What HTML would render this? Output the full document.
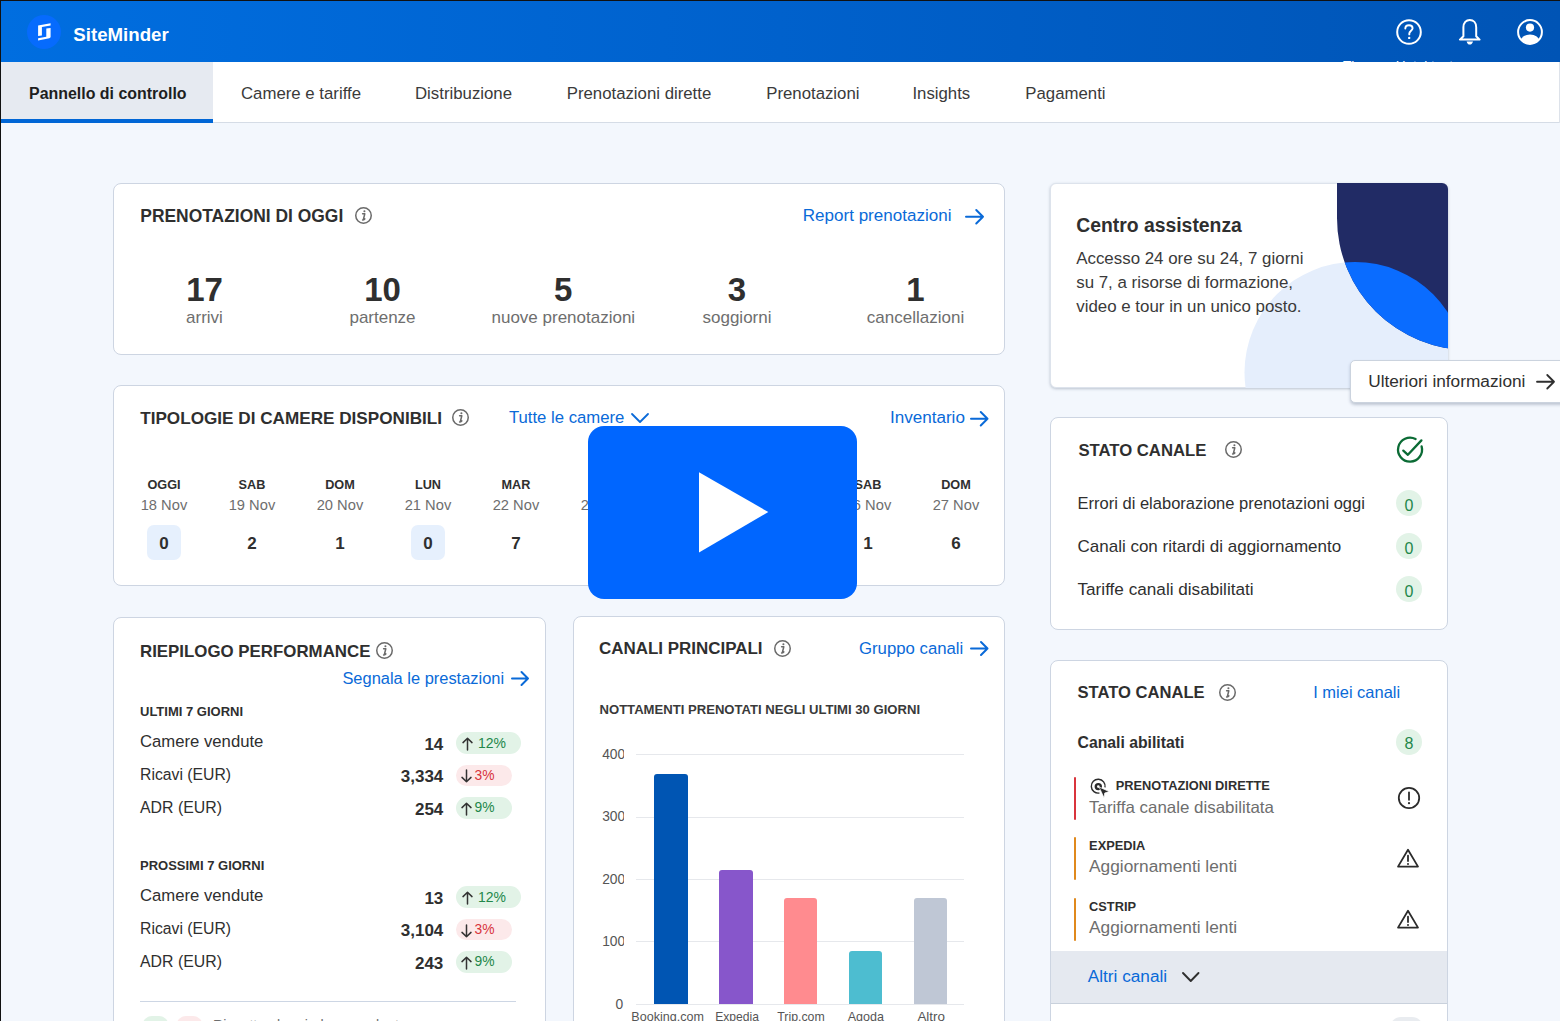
<!DOCTYPE html>
<html><head><meta charset="utf-8"><style>
html,body{margin:0;padding:0;width:1560px;height:1021px;overflow:hidden;background:#f3f7fd;font-family:"Liberation Sans",sans-serif;}
.t{position:absolute;white-space:nowrap;font-family:"Liberation Sans",sans-serif;}
</style></head><body>
<div style="position:absolute;left:0;top:0;width:1560px;height:62px;background:linear-gradient(90deg,#006ee0 0%,#0061cc 50%,#0054b5 100%)"></div>
<div style="position:absolute;left:0;top:0;width:1560px;height:1px;background:#111"></div>
<div style="position:absolute;left:0;top:0;width:1px;height:1021px;background:#111"></div>
<div style="position:absolute;left:27px;top:15px;width:34px;height:34px;border-radius:50%;background:#066bfd"></div>
<svg style="position:absolute;left:27px;top:15px" width="34" height="34" viewBox="0 0 34 34"><path d="M11.1 10.6 L23.6 8.3 L23.6 10.6 L14.9 12.1 L14.9 20.6 L11.1 21.0 Z" fill="#fff"/><path d="M19.3 13.4 L23.6 12.9 L23.6 22.2 L22.4 23.2 L11.1 25.6 L11.1 23.3 L19.3 21.8 Z" fill="#fff"/></svg>
<div class="t" style="left:73.30px;top:26.20px;font-size:18.66px;line-height:18.66px;font-weight:bold;color:#fff;">SiteMinder</div>
<svg style="position:absolute;left:1394px;top:17px" width="30" height="30" viewBox="0 0 30 30"><circle cx="15" cy="15" r="11.8" fill="none" stroke="#fff" stroke-width="2"/><path d="M11.3 11.6 C11.3 9.3 13 8.2 15 8.2 C17.1 8.2 18.6 9.5 18.6 11.3 C18.6 13.6 15.3 14 15.3 16.6 L15.3 17.4" fill="none" stroke="#fff" stroke-width="1.9" stroke-linecap="round"/><circle cx="15.2" cy="20.9" r="1.2" fill="#fff"/></svg>
<svg style="position:absolute;left:1455px;top:17px" width="30" height="30" viewBox="0 0 30 30"><path d="M8.4 19.2 V10.3 C8.4 5.6 11.2 2.9 14.8 2.9 C18.4 2.9 21.2 5.6 21.2 10.3 V19.2 L24.6 22.6 H4.9 Z" fill="none" stroke="#fff" stroke-width="2" stroke-linejoin="round"/><path d="M11.6 24.4 H18.0 C17.5 26.4 16.4 27.5 14.8 27.5 C13.2 27.5 12.1 26.4 11.6 24.4 Z" fill="#fff"/></svg>
<svg style="position:absolute;left:1515px;top:17px" width="30" height="30" viewBox="0 0 30 30"><defs><clipPath id="uc"><circle cx="15" cy="15" r="12"/></clipPath></defs><circle cx="15" cy="15" r="11.9" fill="none" stroke="#fff" stroke-width="2"/><circle cx="15" cy="10.6" r="4.1" fill="#fff"/><ellipse cx="15" cy="24.5" rx="9.5" ry="7" fill="#fff" clip-path="url(#uc)"/></svg>
<div class="t" style="left:1343.00px;top:58.72px;font-size:13.56px;line-height:13.56px;color:#fff;">Thomas Hotel test</div>
<div style="position:absolute;left:1px;top:62px;width:1559px;height:60px;background:#fff;border-bottom:1px solid #d5dce6"></div>
<div style="position:absolute;left:1559px;top:62px;width:1px;height:61px;background:#dde2ea"></div>
<div style="position:absolute;left:1px;top:62px;width:212px;height:57px;background:#e6eaf1"></div>
<div style="position:absolute;left:1px;top:119px;width:212px;height:4px;background:#0066d6"></div>
<div class="t" style="left:29.00px;top:85.70px;font-size:15.95px;line-height:15.95px;font-weight:bold;color:#1e1e1e;">Pannello di controllo</div>
<div class="t" style="left:241.00px;top:85.58px;font-size:16.80px;line-height:16.80px;color:#3a3a3a;">Camere e tariffe</div>
<div class="t" style="left:415.00px;top:85.58px;font-size:16.80px;line-height:16.80px;color:#3a3a3a;">Distribuzione</div>
<div class="t" style="left:566.70px;top:85.58px;font-size:16.80px;line-height:16.80px;color:#3a3a3a;">Prenotazioni dirette</div>
<div class="t" style="left:766.20px;top:85.58px;font-size:16.80px;line-height:16.80px;color:#3a3a3a;">Prenotazioni</div>
<div class="t" style="left:912.40px;top:85.58px;font-size:16.80px;line-height:16.80px;color:#3a3a3a;">Insights</div>
<div class="t" style="left:1025.30px;top:85.58px;font-size:16.80px;line-height:16.80px;color:#3a3a3a;">Pagamenti</div>
<div style="position:absolute;left:113px;top:183px;width:892px;height:172px;background:#fff;border:1px solid #cdd5e2;border-radius:8px;box-sizing:border-box;"></div>
<div class="t" style="left:140.30px;top:208.04px;font-size:17.43px;line-height:17.43px;font-weight:bold;color:#2f2f2f;">PRENOTAZIONI DI OGGI</div>
<svg style="position:absolute;left:353.00px;top:205.30px" width="21.0" height="21.0" viewBox="0 0 21.0 21.0"><circle cx="10.50" cy="10.50" r="7.75" fill="none" stroke="#6a6a6a" stroke-width="1.5"/><circle cx="11.40" cy="6.20" r="1.05" fill="#6a6a6a"/><path d="M9.60 8.80 H11.80 L10.30 14.80 M9.60 15.10 Q10.80 15.10 11.80 13.90" fill="none" stroke="#6a6a6a" stroke-width="1.5" stroke-linecap="round" stroke-linejoin="round"/></svg>
<div class="t" style="left:802.80px;top:207.47px;font-size:17.04px;line-height:17.04px;color:#0a6ad8;">Report prenotazioni</div>
<svg style="position:absolute;left:964.5px;top:208.5px;overflow:visible" width="19" height="15.5"><path d="M1 7.75 H18 M11.25 1 L18 7.75 L11.25 14.5" fill="none" stroke="#0a6ad8" stroke-width="2" stroke-linecap="round" stroke-linejoin="round"/></svg>
<div class="t" style="left:186.15px;top:272.86px;font-size:33.00px;line-height:33.00px;font-weight:bold;color:#2f2f2f;">17</div>
<div class="t" style="left:186.07px;top:309.31px;font-size:17.00px;line-height:17.00px;color:#6e6e6e;">arrivi</div>
<div class="t" style="left:364.15px;top:272.86px;font-size:33.00px;line-height:33.00px;font-weight:bold;color:#2f2f2f;">10</div>
<div class="t" style="left:349.43px;top:309.31px;font-size:17.00px;line-height:17.00px;color:#6e6e6e;">partenze</div>
<div class="t" style="left:554.12px;top:272.86px;font-size:33.00px;line-height:33.00px;font-weight:bold;color:#2f2f2f;">5</div>
<div class="t" style="left:491.47px;top:309.31px;font-size:17.00px;line-height:17.00px;color:#6e6e6e;">nuove prenotazioni</div>
<div class="t" style="left:727.83px;top:272.86px;font-size:33.00px;line-height:33.00px;font-weight:bold;color:#2f2f2f;">3</div>
<div class="t" style="left:702.50px;top:309.31px;font-size:17.00px;line-height:17.00px;color:#6e6e6e;">soggiorni</div>
<div class="t" style="left:906.33px;top:272.86px;font-size:33.00px;line-height:33.00px;font-weight:bold;color:#2f2f2f;">1</div>
<div class="t" style="left:866.83px;top:309.31px;font-size:17.00px;line-height:17.00px;color:#6e6e6e;">cancellazioni</div>
<div style="position:absolute;left:113px;top:385px;width:892px;height:201px;background:#fff;border:1px solid #cdd5e2;border-radius:8px;box-sizing:border-box;"></div>
<div class="t" style="left:140.20px;top:410.08px;font-size:17.15px;line-height:17.15px;font-weight:bold;color:#2f2f2f;">TIPOLOGIE DI CAMERE DISPONIBILI</div>
<svg style="position:absolute;left:450.30px;top:407.20px" width="21.0" height="21.0" viewBox="0 0 21.0 21.0"><circle cx="10.50" cy="10.50" r="7.75" fill="none" stroke="#6a6a6a" stroke-width="1.5"/><circle cx="11.40" cy="6.20" r="1.05" fill="#6a6a6a"/><path d="M9.60 8.80 H11.80 L10.30 14.80 M9.60 15.10 Q10.80 15.10 11.80 13.90" fill="none" stroke="#6a6a6a" stroke-width="1.5" stroke-linecap="round" stroke-linejoin="round"/></svg>
<div class="t" style="left:508.90px;top:409.74px;font-size:16.73px;line-height:16.73px;color:#0a6ad8;">Tutte le camere</div>
<svg style="position:absolute;left:630.5px;top:413px;overflow:visible" width="18" height="10"><path d="M1 1 L9.0 9 L17 1" fill="none" stroke="#0a6ad8" stroke-width="1.8" stroke-linecap="round" stroke-linejoin="round"/></svg>
<div class="t" style="left:889.90px;top:408.84px;font-size:17.08px;line-height:17.08px;color:#0a6ad8;">Inventario</div>
<svg style="position:absolute;left:970px;top:411px;overflow:visible" width="18.5" height="15.5"><path d="M1 7.75 H17.5 M10.75 1 L17.5 7.75 L10.75 14.5" fill="none" stroke="#0a6ad8" stroke-width="2" stroke-linecap="round" stroke-linejoin="round"/></svg>
<div style="position:absolute;left:147px;top:525px;width:34px;height:35px;background:#e6f0fd;border-radius:7px"></div>
<div class="t" style="left:147.43px;top:478.85px;font-size:12.70px;line-height:12.70px;font-weight:bold;color:#2f2f2f;">OGGI</div>
<div class="t" style="left:140.70px;top:497.65px;font-size:14.70px;line-height:14.70px;color:#6e6e6e;">18 Nov</div>
<div class="t" style="left:159.28px;top:534.51px;font-size:17.00px;line-height:17.00px;font-weight:bold;color:#2f2f2f;">0</div>
<div class="t" style="left:238.60px;top:478.85px;font-size:12.70px;line-height:12.70px;font-weight:bold;color:#2f2f2f;">SAB</div>
<div class="t" style="left:228.70px;top:497.65px;font-size:14.70px;line-height:14.70px;color:#6e6e6e;">19 Nov</div>
<div class="t" style="left:247.28px;top:534.51px;font-size:17.00px;line-height:17.00px;font-weight:bold;color:#2f2f2f;">2</div>
<div class="t" style="left:325.18px;top:478.85px;font-size:12.70px;line-height:12.70px;font-weight:bold;color:#2f2f2f;">DOM</div>
<div class="t" style="left:316.70px;top:497.65px;font-size:14.70px;line-height:14.70px;color:#6e6e6e;">20 Nov</div>
<div class="t" style="left:335.27px;top:534.51px;font-size:17.00px;line-height:17.00px;font-weight:bold;color:#2f2f2f;">1</div>
<div style="position:absolute;left:411px;top:525px;width:34px;height:35px;background:#e6f0fd;border-radius:7px"></div>
<div class="t" style="left:414.95px;top:478.85px;font-size:12.70px;line-height:12.70px;font-weight:bold;color:#2f2f2f;">LUN</div>
<div class="t" style="left:404.70px;top:497.65px;font-size:14.70px;line-height:14.70px;color:#6e6e6e;">21 Nov</div>
<div class="t" style="left:423.27px;top:534.51px;font-size:17.00px;line-height:17.00px;font-weight:bold;color:#2f2f2f;">0</div>
<div class="t" style="left:501.55px;top:478.85px;font-size:12.70px;line-height:12.70px;font-weight:bold;color:#2f2f2f;">MAR</div>
<div class="t" style="left:492.70px;top:497.65px;font-size:14.70px;line-height:14.70px;color:#6e6e6e;">22 Nov</div>
<div class="t" style="left:511.27px;top:534.51px;font-size:17.00px;line-height:17.00px;font-weight:bold;color:#2f2f2f;">7</div>
<div class="t" style="left:589.90px;top:478.85px;font-size:12.70px;line-height:12.70px;font-weight:bold;color:#2f2f2f;">MER</div>
<div class="t" style="left:580.70px;top:497.65px;font-size:14.70px;line-height:14.70px;color:#6e6e6e;">23 Nov</div>
<div class="t" style="left:599.27px;top:534.51px;font-size:17.00px;line-height:17.00px;font-weight:bold;color:#2f2f2f;">3</div>
<div class="t" style="left:680.35px;top:478.85px;font-size:12.70px;line-height:12.70px;font-weight:bold;color:#2f2f2f;">GIO</div>
<div class="t" style="left:668.70px;top:497.65px;font-size:14.70px;line-height:14.70px;color:#6e6e6e;">24 Nov</div>
<div class="t" style="left:687.27px;top:534.51px;font-size:17.00px;line-height:17.00px;font-weight:bold;color:#2f2f2f;">4</div>
<div class="t" style="left:766.95px;top:478.85px;font-size:12.70px;line-height:12.70px;font-weight:bold;color:#2f2f2f;">VEN</div>
<div class="t" style="left:756.70px;top:497.65px;font-size:14.70px;line-height:14.70px;color:#6e6e6e;">25 Nov</div>
<div class="t" style="left:775.27px;top:534.51px;font-size:17.00px;line-height:17.00px;font-weight:bold;color:#2f2f2f;">2</div>
<div class="t" style="left:854.60px;top:478.85px;font-size:12.70px;line-height:12.70px;font-weight:bold;color:#2f2f2f;">SAB</div>
<div class="t" style="left:844.70px;top:497.65px;font-size:14.70px;line-height:14.70px;color:#6e6e6e;">26 Nov</div>
<div class="t" style="left:863.27px;top:534.51px;font-size:17.00px;line-height:17.00px;font-weight:bold;color:#2f2f2f;">1</div>
<div class="t" style="left:941.17px;top:478.85px;font-size:12.70px;line-height:12.70px;font-weight:bold;color:#2f2f2f;">DOM</div>
<div class="t" style="left:932.70px;top:497.65px;font-size:14.70px;line-height:14.70px;color:#6e6e6e;">27 Nov</div>
<div class="t" style="left:951.27px;top:534.51px;font-size:17.00px;line-height:17.00px;font-weight:bold;color:#2f2f2f;">6</div>
<div style="position:absolute;left:113px;top:617px;width:433px;height:420px;background:#fff;border:1px solid #cdd5e2;border-radius:8px;box-sizing:border-box;"></div>
<div class="t" style="left:140.00px;top:643.82px;font-size:16.86px;line-height:16.86px;font-weight:bold;color:#2f2f2f;">RIEPILOGO PERFORMANCE</div>
<svg style="position:absolute;left:373.50px;top:640.00px" width="21.0" height="21.0" viewBox="0 0 21.0 21.0"><circle cx="10.50" cy="10.50" r="7.75" fill="none" stroke="#6a6a6a" stroke-width="1.5"/><circle cx="11.40" cy="6.20" r="1.05" fill="#6a6a6a"/><path d="M9.60 8.80 H11.80 L10.30 14.80 M9.60 15.10 Q10.80 15.10 11.80 13.90" fill="none" stroke="#6a6a6a" stroke-width="1.5" stroke-linecap="round" stroke-linejoin="round"/></svg>
<div class="t" style="left:342.40px;top:669.66px;font-size:16.46px;line-height:16.46px;color:#0a6ad8;">Segnala le prestazioni</div>
<svg style="position:absolute;left:510.5px;top:671px;overflow:visible" width="18" height="15"><path d="M1 7.5 H17 M10.5 1 L17 7.5 L10.5 14" fill="none" stroke="#0a6ad8" stroke-width="2" stroke-linecap="round" stroke-linejoin="round"/></svg>
<div class="t" style="left:140.00px;top:704.99px;font-size:13.00px;line-height:13.00px;font-weight:bold;color:#2f2f2f;">ULTIMI 7 GIORNI</div>
<div class="t" style="left:140.00px;top:733.86px;font-size:16.70px;line-height:16.70px;color:#2f2f2f;">Camere vendute</div>
<div class="t" style="left:424.40px;top:735.61px;font-size:17.00px;line-height:17.00px;font-weight:bold;color:#2f2f2f;">14</div>
<div style="position:absolute;left:455.6px;top:732.0px;width:65px;height:21.7px;background:#e2f3e7;border-radius:11px"></div>
<svg style="position:absolute;left:461px;top:736.7px" width="13" height="14"><path d="M6.5 13 V1.2 M2 5.6 L6.5 1.2 L11 5.6" fill="none" stroke="#333" stroke-width="1.5" stroke-linecap="round" stroke-linejoin="round"/></svg>
<div class="t" style="left:478.00px;top:735.86px;font-size:13.99px;line-height:13.99px;color:#23874a;">12%</div>
<div class="t" style="left:140.00px;top:767.24px;font-size:15.78px;line-height:15.78px;color:#2f2f2f;">Ricavi (EUR)</div>
<div class="t" style="left:400.75px;top:768.21px;font-size:17.00px;line-height:17.00px;font-weight:bold;color:#2f2f2f;">3,334</div>
<div style="position:absolute;left:455.6px;top:764.6px;width:56.4px;height:21.7px;background:#fce9ea;border-radius:11px"></div>
<svg style="position:absolute;left:460px;top:769.3px" width="13" height="14"><path d="M6.5 1 V12.8 M2 8.4 L6.5 12.8 L11 8.4" fill="none" stroke="#333" stroke-width="1.5" stroke-linecap="round" stroke-linejoin="round"/></svg>
<div class="t" style="left:474.50px;top:768.59px;font-size:13.84px;line-height:13.84px;color:#d8343c;">3%</div>
<div class="t" style="left:140.00px;top:799.76px;font-size:15.87px;line-height:15.87px;color:#2f2f2f;">ADR (EUR)</div>
<div class="t" style="left:414.95px;top:800.81px;font-size:17.00px;line-height:17.00px;font-weight:bold;color:#2f2f2f;">254</div>
<div style="position:absolute;left:455.6px;top:797.2px;width:56.4px;height:21.7px;background:#e2f3e7;border-radius:11px"></div>
<svg style="position:absolute;left:460.2px;top:801.9px" width="13" height="14"><path d="M6.5 13 V1.2 M2 5.6 L6.5 1.2 L11 5.6" fill="none" stroke="#333" stroke-width="1.5" stroke-linecap="round" stroke-linejoin="round"/></svg>
<div class="t" style="left:474.50px;top:801.19px;font-size:13.84px;line-height:13.84px;color:#23874a;">9%</div>
<div class="t" style="left:140.00px;top:859.19px;font-size:13.00px;line-height:13.00px;font-weight:bold;color:#2f2f2f;">PROSSIMI 7 GIORNI</div>
<div class="t" style="left:140.00px;top:888.06px;font-size:16.70px;line-height:16.70px;color:#2f2f2f;">Camere vendute</div>
<div class="t" style="left:424.40px;top:889.81px;font-size:17.00px;line-height:17.00px;font-weight:bold;color:#2f2f2f;">13</div>
<div style="position:absolute;left:455.6px;top:886.2px;width:65px;height:21.7px;background:#e2f3e7;border-radius:11px"></div>
<svg style="position:absolute;left:461px;top:890.9px" width="13" height="14"><path d="M6.5 13 V1.2 M2 5.6 L6.5 1.2 L11 5.6" fill="none" stroke="#333" stroke-width="1.5" stroke-linecap="round" stroke-linejoin="round"/></svg>
<div class="t" style="left:478.00px;top:890.06px;font-size:13.99px;line-height:13.99px;color:#23874a;">12%</div>
<div class="t" style="left:140.00px;top:921.44px;font-size:15.78px;line-height:15.78px;color:#2f2f2f;">Ricavi (EUR)</div>
<div class="t" style="left:400.75px;top:922.41px;font-size:17.00px;line-height:17.00px;font-weight:bold;color:#2f2f2f;">3,104</div>
<div style="position:absolute;left:455.6px;top:918.8000000000001px;width:56.4px;height:21.7px;background:#fce9ea;border-radius:11px"></div>
<svg style="position:absolute;left:460px;top:923.5px" width="13" height="14"><path d="M6.5 1 V12.8 M2 8.4 L6.5 12.8 L11 8.4" fill="none" stroke="#333" stroke-width="1.5" stroke-linecap="round" stroke-linejoin="round"/></svg>
<div class="t" style="left:474.50px;top:922.79px;font-size:13.84px;line-height:13.84px;color:#d8343c;">3%</div>
<div class="t" style="left:140.00px;top:953.96px;font-size:15.87px;line-height:15.87px;color:#2f2f2f;">ADR (EUR)</div>
<div class="t" style="left:414.95px;top:955.01px;font-size:17.00px;line-height:17.00px;font-weight:bold;color:#2f2f2f;">243</div>
<div style="position:absolute;left:455.6px;top:951.4000000000001px;width:56.4px;height:21.7px;background:#e2f3e7;border-radius:11px"></div>
<svg style="position:absolute;left:460.2px;top:956.1px" width="13" height="14"><path d="M6.5 13 V1.2 M2 5.6 L6.5 1.2 L11 5.6" fill="none" stroke="#333" stroke-width="1.5" stroke-linecap="round" stroke-linejoin="round"/></svg>
<div class="t" style="left:474.50px;top:955.39px;font-size:13.84px;line-height:13.84px;color:#23874a;">9%</div>
<div style="position:absolute;left:140px;top:1000.5px;width:376px;height:1.3px;background:#cdd6e4"></div>
<div style="position:absolute;left:142px;top:1016px;width:27px;height:20px;background:#e2f3e7;border-radius:10px"></div>
<div style="position:absolute;left:176px;top:1016px;width:27px;height:20px;background:#fce9ea;border-radius:10px"></div>
<div class="t" style="left:213.00px;top:1018.44px;font-size:14.24px;line-height:14.24px;color:#6e6e6e;">Rispetto al periodo precedente</div>
<div style="position:absolute;left:573px;top:616px;width:432px;height:420px;background:#fff;border:1px solid #cdd5e2;border-radius:8px;box-sizing:border-box;"></div>
<div class="t" style="left:599.00px;top:641.23px;font-size:16.97px;line-height:16.97px;font-weight:bold;color:#2f2f2f;">CANALI PRINCIPALI</div>
<svg style="position:absolute;left:772.00px;top:638.00px" width="21.0" height="21.0" viewBox="0 0 21.0 21.0"><circle cx="10.50" cy="10.50" r="7.75" fill="none" stroke="#6a6a6a" stroke-width="1.5"/><circle cx="11.40" cy="6.20" r="1.05" fill="#6a6a6a"/><path d="M9.60 8.80 H11.80 L10.30 14.80 M9.60 15.10 Q10.80 15.10 11.80 13.90" fill="none" stroke="#6a6a6a" stroke-width="1.5" stroke-linecap="round" stroke-linejoin="round"/></svg>
<div class="t" style="left:859.00px;top:640.62px;font-size:16.75px;line-height:16.75px;color:#0a6ad8;">Gruppo canali</div>
<svg style="position:absolute;left:970px;top:641px;overflow:visible" width="18.5" height="15"><path d="M1 7.5 H17.5 M11.0 1 L17.5 7.5 L11.0 14" fill="none" stroke="#0a6ad8" stroke-width="2" stroke-linecap="round" stroke-linejoin="round"/></svg>
<div style="position:absolute;left:599px;top:690px;width:400px;height:30px;overflow:hidden">
<div class="t" style="left:-26.45px;top:12.91px;font-size:13.10px;line-height:13.10px;font-weight:bold;color:#3a3a3a;">PERNOTTAMENTI PRENOTATI NEGLI ULTIMI 30 GIORNI</div>
</div>
<div style="position:absolute;left:636px;top:754.1px;width:328px;height:1px;background:#e6e8ec"></div>
<div style="position:absolute;left:590px;top:742.6px;width:34px;height:24px;overflow:hidden">
<div class="t" style="left:12.15px;top:5.32px;font-size:13.80px;line-height:13.80px;color:#555;">400</div>
</div>
<div style="position:absolute;left:636px;top:816.5500000000001px;width:328px;height:1px;background:#e6e8ec"></div>
<div style="position:absolute;left:590px;top:805.1px;width:34px;height:24px;overflow:hidden">
<div class="t" style="left:12.15px;top:5.32px;font-size:13.80px;line-height:13.80px;color:#555;">300</div>
</div>
<div style="position:absolute;left:636px;top:879.0px;width:328px;height:1px;background:#e6e8ec"></div>
<div style="position:absolute;left:590px;top:867.5px;width:34px;height:24px;overflow:hidden">
<div class="t" style="left:12.15px;top:5.32px;font-size:13.80px;line-height:13.80px;color:#555;">200</div>
</div>
<div style="position:absolute;left:636px;top:941.45px;width:328px;height:1px;background:#e6e8ec"></div>
<div style="position:absolute;left:590px;top:930.0px;width:34px;height:24px;overflow:hidden">
<div class="t" style="left:12.15px;top:5.32px;font-size:13.80px;line-height:13.80px;color:#555;">100</div>
</div>
<div style="position:absolute;left:636px;top:1003.9000000000001px;width:328px;height:1px;background:#e6e8ec"></div>
<div style="position:absolute;left:590px;top:992.4px;width:34px;height:24px;overflow:hidden">
<div class="t" style="left:25.60px;top:5.32px;font-size:13.80px;line-height:13.80px;color:#555;">0</div>
</div>
<div style="position:absolute;left:654.4px;top:774.2px;width:33.3px;height:230.19999999999993px;background:#0055b3;border-radius:3px 3px 0 0"></div>
<div class="t" style="left:631.33px;top:1010.87px;font-size:12.56px;line-height:12.56px;color:#555;">Booking.com</div>
<div style="position:absolute;left:719.4px;top:870.3px;width:33.3px;height:134.10000000000002px;background:#8756cb;border-radius:3px 3px 0 0"></div>
<div class="t" style="left:715.23px;top:1011.24px;font-size:12.12px;line-height:12.12px;color:#555;">Expedia</div>
<div style="position:absolute;left:784px;top:898.2px;width:33.3px;height:106.19999999999993px;background:#ff8b8f;border-radius:3px 3px 0 0"></div>
<div class="t" style="left:777.23px;top:1011.06px;font-size:12.33px;line-height:12.33px;color:#555;">Trip.com</div>
<div style="position:absolute;left:849.1px;top:951.1px;width:33.3px;height:53.299999999999955px;background:#4dbdd0;border-radius:3px 3px 0 0"></div>
<div class="t" style="left:847.65px;top:1010.87px;font-size:12.55px;line-height:12.55px;color:#555;">Agoda</div>
<div style="position:absolute;left:913.8px;top:898.2px;width:33.3px;height:106.19999999999993px;background:#bfc7d5;border-radius:3px 3px 0 0"></div>
<div class="t" style="left:917.43px;top:1010.13px;font-size:13.42px;line-height:13.42px;color:#555;">Altro</div>
<div style="position:absolute;left:1050px;top:183px;width:398px;height:205px;background:#fff;border:1px solid #dde3ec;border-radius:6px;box-sizing:border-box;box-shadow:0 1px 3px rgba(40,60,90,0.28)"></div>
<div style="position:absolute;left:1050px;top:183px;width:398px;height:205px;border-radius:6px;overflow:hidden"><svg style="position:absolute;left:0;top:0" width="398" height="205"><defs><clipPath id="nv"><path d="M287 -5 H420 V167 A132 132 0 0 1 287 35 Z"/></clipPath></defs><circle cx="305" cy="189.5" r="110.5" fill="#e5eefc"/><path d="M287 -5 H420 V167 A132 132 0 0 1 287 35 Z" fill="#212b65"/><circle cx="305" cy="189.5" r="110.5" fill="#0a6cff" clip-path="url(#nv)"/></svg></div>
<div class="t" style="left:1076.20px;top:215.89px;font-size:19.38px;line-height:19.38px;font-weight:bold;color:#2f2f2f;">Centro assistenza</div>
<div class="t" style="left:1076.20px;top:251.49px;font-size:16.90px;line-height:16.90px;color:#3a3a3a;">Accesso 24 ore su 24, 7 giorni</div>
<div class="t" style="left:1076.20px;top:275.34px;font-size:16.90px;line-height:16.90px;color:#3a3a3a;">su 7, a risorse di formazione,</div>
<div class="t" style="left:1076.20px;top:299.19px;font-size:16.90px;line-height:16.90px;color:#3a3a3a;">video e tour in un unico posto.</div>
<div style="position:absolute;left:1350px;top:359.5px;width:240px;height:43px;background:#fff;border:1px solid #cbd3de;border-radius:5px;box-sizing:border-box;box-shadow:0 2px 3px rgba(40,60,90,0.25)"></div>
<div class="t" style="left:1368.20px;top:373.19px;font-size:17.26px;line-height:17.26px;color:#2f2f2f;">Ulteriori informazioni</div>
<svg style="position:absolute;left:1535.5px;top:373.5px;overflow:visible" width="19" height="15.5"><path d="M1 7.75 H18 M11.25 1 L18 7.75 L11.25 14.5" fill="none" stroke="#2f2f2f" stroke-width="1.8" stroke-linecap="round" stroke-linejoin="round"/></svg>
<div style="position:absolute;left:1050px;top:417px;width:398px;height:213px;background:#fff;border:1px solid #cdd5e2;border-radius:8px;box-sizing:border-box;"></div>
<div class="t" style="left:1078.40px;top:442.66px;font-size:16.70px;line-height:16.70px;font-weight:bold;color:#2f2f2f;">STATO CANALE</div>
<svg style="position:absolute;left:1223.10px;top:439.20px" width="21.0" height="21.0" viewBox="0 0 21.0 21.0"><circle cx="10.50" cy="10.50" r="7.75" fill="none" stroke="#6a6a6a" stroke-width="1.5"/><circle cx="11.40" cy="6.20" r="1.05" fill="#6a6a6a"/><path d="M9.60 8.80 H11.80 L10.30 14.80 M9.60 15.10 Q10.80 15.10 11.80 13.90" fill="none" stroke="#6a6a6a" stroke-width="1.5" stroke-linecap="round" stroke-linejoin="round"/></svg>
<svg style="position:absolute;left:1394px;top:434px" width="32" height="32" viewBox="0 0 32 32"><path d="M21.6 5.0 A12 12 0 1 0 27.6 12.4" fill="none" stroke="#0b6b35" stroke-width="2.3" stroke-linecap="round"/><path d="M9.3 16.6 L13.9 20.8 L27.4 6.4" fill="none" stroke="#0b6b35" stroke-width="2.3" stroke-linecap="round" stroke-linejoin="round"/></svg>
<div class="t" style="left:1077.50px;top:496.01px;font-size:16.52px;line-height:16.52px;color:#2f2f2f;">Errori di elaborazione prenotazioni oggi</div>
<div style="position:absolute;left:1396px;top:490.0px;width:26px;height:26px;background:#e2f3e7;border-radius:50%"></div>
<div class="t" style="left:1404.55px;top:498.25px;font-size:16.00px;line-height:16.00px;color:#23874a;">0</div>
<div class="t" style="left:1077.50px;top:538.35px;font-size:17.01px;line-height:17.01px;color:#2f2f2f;">Canali con ritardi di aggiornamento</div>
<div style="position:absolute;left:1396px;top:533.2px;width:26px;height:26px;background:#e2f3e7;border-radius:50%"></div>
<div class="t" style="left:1404.55px;top:541.00px;font-size:16.00px;line-height:16.00px;color:#23874a;">0</div>
<div class="t" style="left:1077.50px;top:580.96px;font-size:17.17px;line-height:17.17px;color:#2f2f2f;">Tariffe canali disabilitati</div>
<div style="position:absolute;left:1396px;top:576.4px;width:26px;height:26px;background:#e2f3e7;border-radius:50%"></div>
<div class="t" style="left:1404.55px;top:583.75px;font-size:16.00px;line-height:16.00px;color:#23874a;">0</div>
<div style="position:absolute;left:1050px;top:660px;width:398px;height:420px;background:#fff;border:1px solid #cdd5e2;border-radius:8px;box-sizing:border-box;"></div>
<div class="t" style="left:1077.50px;top:685.05px;font-size:16.59px;line-height:16.59px;font-weight:bold;color:#2f2f2f;">STATO CANALE</div>
<svg style="position:absolute;left:1216.90px;top:681.60px" width="21.0" height="21.0" viewBox="0 0 21.0 21.0"><circle cx="10.50" cy="10.50" r="7.75" fill="none" stroke="#6a6a6a" stroke-width="1.5"/><circle cx="11.40" cy="6.20" r="1.05" fill="#6a6a6a"/><path d="M9.60 8.80 H11.80 L10.30 14.80 M9.60 15.10 Q10.80 15.10 11.80 13.90" fill="none" stroke="#6a6a6a" stroke-width="1.5" stroke-linecap="round" stroke-linejoin="round"/></svg>
<div class="t" style="left:1313.20px;top:684.45px;font-size:16.48px;line-height:16.48px;color:#0a6ad8;">I miei canali</div>
<div class="t" style="left:1077.50px;top:735.14px;font-size:15.78px;line-height:15.78px;font-weight:bold;color:#2f2f2f;">Canali abilitati</div>
<div style="position:absolute;left:1396px;top:729px;width:26px;height:26px;background:#e2f3e7;border-radius:50%"></div>
<div class="t" style="left:1404.55px;top:735.95px;font-size:16.00px;line-height:16.00px;color:#23874a;">8</div>
<div style="position:absolute;left:1073.5px;top:777px;width:2.2px;height:42.5px;background:#d9343c;border-radius:1px"></div>
<div class="t" style="left:1115.70px;top:779.55px;font-size:12.82px;line-height:12.82px;font-weight:bold;color:#2f2f2f;">PRENOTAZIONI DIRETTE</div>
<svg style="position:absolute;left:1089px;top:777px" width="21" height="21" viewBox="0 0 21 21"><path d="M10.4 16.0 A6.9 6.9 0 1 1 16.0 10.4" fill="none" stroke="#2b2b2b" stroke-width="1.4"/><circle cx="9.3" cy="9.6" r="2.5" fill="none" stroke="#2b2b2b" stroke-width="2.4"/><path d="M10.0 9.9 L20.2 14.6 L15.7 16.0 L15.0 20.8 Z" fill="#2b2b2b" stroke="#fff" stroke-width="0.7" stroke-linejoin="round"/></svg>
<div class="t" style="left:1089.10px;top:799.67px;font-size:16.92px;line-height:16.92px;color:#6e6e6e;">Tariffa canale disabilitata</div>
<svg style="position:absolute;left:1396px;top:786px" width="26" height="24" viewBox="0 0 26 24"><circle cx="13" cy="12" r="10.2" fill="none" stroke="#2b2b2b" stroke-width="1.8"/><path d="M13 6.5 V13.8" stroke="#2b2b2b" stroke-width="1.8" stroke-linecap="round"/><circle cx="13" cy="17.2" r="1.1" fill="#2b2b2b"/></svg>
<div style="position:absolute;left:1073.5px;top:837.3px;width:2.2px;height:42.5px;background:#e0891c;border-radius:1px"></div>
<div class="t" style="left:1089.10px;top:840.06px;font-size:12.80px;line-height:12.80px;font-weight:bold;color:#2f2f2f;">EXPEDIA</div>
<div class="t" style="left:1089.10px;top:857.95px;font-size:17.30px;line-height:17.30px;color:#6e6e6e;">Aggiornamenti lenti</div>
<svg style="position:absolute;left:1396px;top:848.2px" width="24" height="21" viewBox="0 0 24 21"><path d="M12 1.8 L22 18.6 H2 Z" fill="none" stroke="#2b2b2b" stroke-width="1.8" stroke-linejoin="round"/><path d="M12 7.6 V13" stroke="#2b2b2b" stroke-width="1.8" stroke-linecap="round"/><circle cx="12" cy="15.9" r="1" fill="#2b2b2b"/></svg>
<div style="position:absolute;left:1073.5px;top:898.2px;width:2.2px;height:42.5px;background:#e0891c;border-radius:1px"></div>
<div class="t" style="left:1089.10px;top:901.46px;font-size:12.80px;line-height:12.80px;font-weight:bold;color:#2f2f2f;">CSTRIP</div>
<div class="t" style="left:1089.10px;top:919.15px;font-size:17.30px;line-height:17.30px;color:#6e6e6e;">Aggiornamenti lenti</div>
<svg style="position:absolute;left:1396px;top:908.7px" width="24" height="21" viewBox="0 0 24 21"><path d="M12 1.8 L22 18.6 H2 Z" fill="none" stroke="#2b2b2b" stroke-width="1.8" stroke-linejoin="round"/><path d="M12 7.6 V13" stroke="#2b2b2b" stroke-width="1.8" stroke-linecap="round"/><circle cx="12" cy="15.9" r="1" fill="#2b2b2b"/></svg>
<div style="position:absolute;left:1051px;top:951px;width:396px;height:52px;background:#e5e9f0;border-bottom:1px solid #c9d1dc"></div>
<div class="t" style="left:1087.70px;top:968.11px;font-size:17.23px;line-height:17.23px;color:#0a6ad8;">Altri canali</div>
<svg style="position:absolute;left:1181.5px;top:972px;overflow:visible" width="17.5" height="10"><path d="M1 1 L8.75 9 L16.5 1" fill="none" stroke="#2f2f2f" stroke-width="1.9" stroke-linecap="round" stroke-linejoin="round"/></svg>
<div style="position:absolute;left:1390px;top:1017px;width:33px;height:22px;background:#e9ecf0;border-radius:11px"></div>
<div style="position:absolute;left:588px;top:426px;width:268.5px;height:172.5px;background:#0066ff;border-radius:16px"></div>
<svg style="position:absolute;left:588px;top:426px" width="269" height="173"><path d="M111 46.3 L180.3 86 L111 126.5 Z" fill="#fff"/></svg>
</body></html>
